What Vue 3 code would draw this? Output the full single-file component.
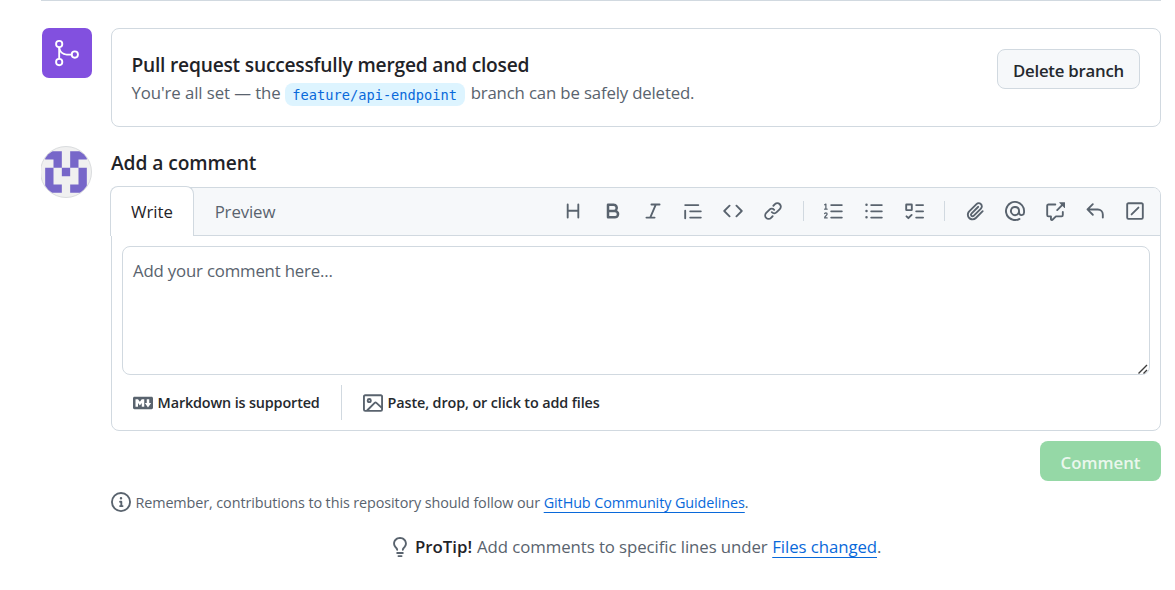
<script setup>
import { ref } from 'vue'

const comment = ref('')

const toolGroups = [
  [
    { label: 'Heading', d: 'M3.75 2a.75.75 0 0 1 .75.75V7h7V2.75a.75.75 0 0 1 1.5 0v10.5a.75.75 0 0 1-1.5 0V8.5h-7v4.75a.75.75 0 0 1-1.5 0V2.75A.75.75 0 0 1 3.75 2Z' },
    { label: 'Bold', d: 'M4 2h4.5a3.501 3.501 0 0 1 2.852 5.53A3.499 3.499 0 0 1 9.5 14H4a1 1 0 0 1-1-1V3a1 1 0 0 1 1-1Zm1 7v3h4.5a1.5 1.5 0 0 0 0-3Zm3.5-2a1.5 1.5 0 0 0 0-3H5v3Z' },
    { label: 'Italic', d: 'M6 2.75A.75.75 0 0 1 6.75 2h6.5a.75.75 0 0 1 0 1.5h-2.505l-3.858 9H9.25a.75.75 0 0 1 0 1.5h-6.5a.75.75 0 0 1 0-1.5h2.505l3.858-9H6.75A.75.75 0 0 1 6 2.75Z' },
    { label: 'Quote', d: 'M1.75 2.5h10.5a.75.75 0 0 1 0 1.5H1.75a.75.75 0 0 1 0-1.5Zm4 5h8.5a.75.75 0 0 1 0 1.5h-8.5a.75.75 0 0 1 0-1.5Zm0 5h8.5a.75.75 0 0 1 0 1.5h-8.5a.75.75 0 0 1 0-1.5ZM2.5 7.75v6a.75.75 0 0 1-1.5 0v-6a.75.75 0 0 1 1.5 0Z' },
    { label: 'Code', d: 'm11.28 3.22 4.25 4.25a.75.75 0 0 1 0 1.06l-4.25 4.25a.749.749 0 0 1-1.275-.326.749.749 0 0 1 .215-.734L13.94 8l-3.72-3.72a.749.749 0 0 1 .326-1.275.749.749 0 0 1 .734.215Zm-6.56 0a.751.751 0 0 1 1.042.018.751.751 0 0 1 .018 1.042L2.06 8l3.72 3.72a.749.749 0 0 1-.326 1.275.749.749 0 0 1-.734-.215L.47 8.53a.75.75 0 0 1 0-1.06Z' },
    { label: 'Link', d: 'm7.775 3.275 1.25-1.25a3.5 3.5 0 1 1 4.95 4.95l-2.5 2.5a3.5 3.5 0 0 1-4.95 0 .751.751 0 0 1 .018-1.042.751.751 0 0 1 1.042-.018 1.998 1.998 0 0 0 2.83 0l2.5-2.5a2.002 2.002 0 0 0-2.83-2.83l-1.25 1.25a.751.751 0 0 1-1.042-.018.751.751 0 0 1-.018-1.042Zm-4.69 9.64a1.998 1.998 0 0 0 2.83 0l1.25-1.25a.751.751 0 0 1 1.042.018.751.751 0 0 1 .018 1.042l-1.25 1.25a3.5 3.5 0 1 1-4.95-4.95l2.5-2.5a3.5 3.5 0 0 1 4.95 0 .751.751 0 0 1-.018 1.042.751.751 0 0 1-1.042.018 1.998 1.998 0 0 0-2.83 0l-2.5 2.5a1.998 1.998 0 0 0 0 2.83Z' }
  ],
  [
    { label: 'Numbered list', d: 'M5 3.25a.75.75 0 0 1 .75-.75h8.5a.75.75 0 0 1 0 1.5h-8.5A.75.75 0 0 1 5 3.25Zm0 5a.75.75 0 0 1 .75-.75h8.5a.75.75 0 0 1 0 1.5h-8.5A.75.75 0 0 1 5 8.25Zm0 5a.75.75 0 0 1 .75-.75h8.5a.75.75 0 0 1 0 1.5h-8.5a.75.75 0 0 1-.75-.75Z', stroke: 'M.5 3 1.5 2.5V6.5M.5 6.5H2.5M.5 10.05Q.9 9.5 1.5 9.5 2.5 9.5 2.5 10.4C2.5 11.7.5 11.9.5 13.5H2.5' },
    { label: 'Bulleted list', d: 'M5.75 2.5h8.5a.75.75 0 0 1 0 1.5h-8.5a.75.75 0 0 1 0-1.5Zm0 5h8.5a.75.75 0 0 1 0 1.5h-8.5a.75.75 0 0 1 0-1.5Zm0 5h8.5a.75.75 0 0 1 0 1.5h-8.5a.75.75 0 0 1 0-1.5ZM2 14a1 1 0 1 1 0-2 1 1 0 0 1 0 2Zm1-6a1 1 0 1 1-2 0 1 1 0 0 1 2 0ZM2 4a1 1 0 1 1 0-2 1 1 0 0 1 0 2Z' },
    { label: 'Task list', d: 'M2 2h4a1 1 0 0 1 1 1v4a1 1 0 0 1-1 1H2a1 1 0 0 1-1-1V3a1 1 0 0 1 1-1Zm4.655 8.595a.75.75 0 0 1 0 1.06L4.03 14.28a.75.75 0 0 1-1.06 0l-1.5-1.5a.749.749 0 0 1 .326-1.275.749.749 0 0 1 .734.215l.97.97 2.095-2.095a.75.75 0 0 1 1.06 0ZM9.75 2.5h5.5a.75.75 0 0 1 0 1.5h-5.5a.75.75 0 0 1 0-1.5Zm0 5h5.5a.75.75 0 0 1 0 1.5h-5.5a.75.75 0 0 1 0-1.5Zm0 5h5.5a.75.75 0 0 1 0 1.5h-5.5a.75.75 0 0 1 0-1.5Zm-7.25-9v3h3v-3Z' }
  ],
  [
    { label: 'Attach files', d: 'M12.212 3.02a1.753 1.753 0 0 0-2.478.003l-5.83 5.83a3.007 3.007 0 0 0-.88 2.127c0 .795.315 1.551.88 2.116.567.567 1.333.89 2.126.89.79 0 1.548-.321 2.116-.89l5.48-5.48a.75.75 0 0 1 1.061 1.06l-5.48 5.48a4.492 4.492 0 0 1-3.177 1.33c-1.2 0-2.345-.487-3.187-1.33a4.483 4.483 0 0 1-1.32-3.177c0-1.195.475-2.341 1.32-3.186l5.83-5.83a3.25 3.25 0 0 1 5.553 2.297c0 .863-.343 1.691-.953 2.301L7.439 12.39c-.375.377-.884.59-1.416.593a1.998 1.998 0 0 1-1.412-.593 1.992 1.992 0 0 1 0-2.828l5.48-5.48a.751.751 0 0 1 1.042.018.751.751 0 0 1 .018 1.042l-5.48 5.48a.492.492 0 0 0 0 .707.499.499 0 0 0 .352.154.51.51 0 0 0 .356-.154l5.833-5.827a1.755 1.755 0 0 0 0-2.481Z' },
    { label: 'Mention', d: 'M4.75 2.37a6.501 6.501 0 0 0 6.5 11.26.75.75 0 0 1 .75 1.298A7.999 7.999 0 0 1 .989 4.148 8 8 0 0 1 16 7.75v1.5a2.75 2.75 0 0 1-5.072 1.475 3.999 3.999 0 0 1-6.65-4.19A4 4 0 0 1 12 8v1.25a1.25 1.25 0 0 0 2.5 0V7.867a6.5 6.5 0 0 0-9.75-5.496ZM10.5 8a2.5 2.5 0 1 0-5 0 2.5 2.5 0 0 0 5 0Z' },
    { label: 'Reference', d: 'M2.75 3.5a.25.25 0 0 0-.25.25v7.5c0 .138.112.25.25.25h2a.75.75 0 0 1 .75.75v2.19l2.72-2.72a.749.749 0 0 1 .53-.22h4.5a.25.25 0 0 0 .25-.25v-2.5a.75.75 0 0 1 1.5 0v2.5A1.75 1.75 0 0 1 13.25 13H9.06l-2.573 2.573A1.458 1.458 0 0 1 4 14.543V13H2.75A1.75 1.75 0 0 1 1 11.25v-7.5C1 2.784 1.784 2 2.75 2h5.5a.75.75 0 0 1 0 1.5ZM16 1.25v4.146a.25.25 0 0 1-.427.177L14.03 4.03l-3.75 3.75a.749.749 0 0 1-1.275-.326.749.749 0 0 1 .215-.734l3.75-3.75-1.543-1.543A.25.25 0 0 1 11.604 1h4.146a.25.25 0 0 1 .25.25Z' },
    { label: 'Saved replies', d: 'M6.78 1.97a.75.75 0 0 1 0 1.06L3.81 6h6.44A4.75 4.75 0 0 1 15 10.75v2.5a.75.75 0 0 1-1.5 0v-2.5a3.25 3.25 0 0 0-3.25-3.25H3.81l2.97 2.97a.749.749 0 0 1-.326 1.275.749.749 0 0 1-.734-.215L1.47 7.28a.75.75 0 0 1 0-1.06l4.25-4.25a.75.75 0 0 1 1.06 0Z' },
    { label: 'Slash commands', d: 'M2.75 1h10.5c.966 0 1.75.784 1.75 1.75v10.5A1.75 1.75 0 0 1 13.25 15H2.75A1.75 1.75 0 0 1 1 13.25V2.75C1 1.784 1.784 1 2.75 1ZM2.5 2.75v10.5c0 .138.112.25.25.25h10.5a.25.25 0 0 0 .25-.25V2.75a.25.25 0 0 0-.25-.25H2.75a.25.25 0 0 0-.25.25Zm8.78 1.97a.75.75 0 0 1 0 1.06l-5.5 5.5a.75.75 0 0 1-1.06-1.06l5.5-5.5a.75.75 0 0 1 1.06 0Z' }
  ]
]
</script>

<template>
  <main class="page">
    <section class="row merged">
      <div class="badge">
        <svg width="30" height="30" viewBox="0 0 24 24" fill="currentColor">
          <path d="M15 13.25a3.25 3.25 0 1 1 6.5 0 3.25 3.25 0 0 1-6.5 0Zm-12.5 6a3.25 3.25 0 1 1 6.5 0 3.25 3.25 0 0 1-6.5 0Zm0-14.5a3.25 3.25 0 1 1 6.5 0 3.25 3.25 0 0 1-6.5 0ZM5.75 6.5a1.75 1.75 0 1 0-.001-3.501A1.75 1.75 0 0 0 5.75 6.5Zm0 14.5a1.75 1.75 0 1 0-.001-3.501A1.75 1.75 0 0 0 5.75 21Zm12.5-6a1.75 1.75 0 1 0-.001-3.501A1.75 1.75 0 0 0 18.25 15Z" />
          <path d="M6.5 7.25c0 2.9 2.35 5.25 5.25 5.25h4.5V14h-4.5A6.75 6.75 0 0 1 5 7.25Z" />
          <path d="M5.75 16.75A.75.75 0 0 1 5 16V8a.75.75 0 0 1 1.5 0v8a.75.75 0 0 1-.75.75Z" />
        </svg>
      </div>
      <div class="card">
        <div class="card-text">
          <h3 class="title">Pull request successfully merged and closed</h3>
          <p class="sub"><span class="sub-a">You're all set — the</span><code class="branch">feature/api-endpoint</code><span class="sub-b">branch can be safely deleted.</span></p>
        </div>
        <button class="btn-delete" type="button">Delete branch</button>
      </div>
    </section>

    <section class="row compose">
      <div class="avatar">
        <svg width="50" height="50" viewBox="0 0 420 420" fill="#7767c9">
          <path d="M35 35h140v140h-70v-70H35ZM245 35h140v70h-70v70h-70ZM35 175h70v140h70v70H35ZM175 175h70v70h-70ZM315 175h70v210H245v-70h70Z" />
        </svg>
      </div>
      <div class="compose-main">
        <h3 class="heading">Add a comment</h3>
        <div class="editor">
          <div class="editor-head">
            <button class="tab tab-write" type="button"><span>Write</span></button>
            <button class="tab tab-preview" type="button"><span>Preview</span></button>
            <div class="tools">
              <div v-for="(group, i) in toolGroups" :key="i" class="group">
                <button v-for="t in group" :key="t.label" class="tool" type="button" :aria-label="t.label">
                  <svg width="20" height="20" viewBox="0 0 16 16" fill="currentColor">
                    <path :d="t.d" />
                    <path v-if="t.stroke" :d="t.stroke" fill="none" stroke="currentColor" stroke-linecap="round" stroke-linejoin="round" />
                  </svg>
                </button>
              </div>
            </div>
          </div>
          <div class="field">
            <textarea v-model="comment" placeholder="Add your comment here..."></textarea>
            <svg class="grip" width="10" height="10" viewBox="0 0 10 10" stroke="#3c3c3c" stroke-width="1.4" fill="none">
              <path d="M0.5 9.5 9 1M5.5 9.5 9 6" />
            </svg>
          </div>
          <div class="editor-foot">
            <span class="hint">
              <svg width="20" height="20" viewBox="0 0 16 16" fill="currentColor">
                <path d="M14.85 3c.63 0 1.15.52 1.14 1.15v7.7c0 .63-.51 1.15-1.15 1.15H1.15C.52 13 0 12.48 0 11.84V4.15C0 3.52.52 3 1.15 3ZM9 11V5H7L5.5 7 4 5H2v6h2V8l1.5 1.92L7 8v3Zm2.99.5L14.5 8H13V5h-2v3H9.5Z" />
              </svg>
              <span class="hint-md">Markdown is supported</span>
            </span>
            <span class="hint hint-second">
              <svg width="20" height="20" viewBox="0 0 16 16" fill="currentColor">
                <path d="M16 13.25A1.75 1.75 0 0 1 14.25 15H1.75A1.75 1.75 0 0 1 0 13.25V2.75C0 1.784.784 1 1.75 1h12.5c.966 0 1.75.784 1.75 1.75ZM1.75 2.5a.25.25 0 0 0-.25.25v10.5c0 .138.112.25.25.25h.94l.03-.03 6.077-6.078a1.75 1.75 0 0 1 2.412-.06L14.5 10.31V2.75a.25.25 0 0 0-.25-.25Zm12.5 11a.25.25 0 0 0 .25-.25v-.917l-4.298-3.889a.25.25 0 0 0-.344.009L4.81 13.5ZM7 6a2 2 0 1 1-3.999.001A2 2 0 0 1 7 6ZM5.5 6a.5.5 0 1 0-1 0 .5.5 0 0 0 1 0Z" />
              </svg>
              <span class="hint-files">Paste, drop, or click to add files</span>
            </span>
          </div>
        </div>
        <div class="actions">
          <button class="btn-comment" type="button" disabled>Comment</button>
        </div>
        <p class="note">
          <svg width="20" height="20" viewBox="0 0 16 16" fill="currentColor">
            <path d="M0 8a8 8 0 1 1 16 0A8 8 0 0 1 0 8Zm8-6.5a6.5 6.5 0 1 0 0 13 6.5 6.5 0 0 0 0-13ZM6.5 7.75A.75.75 0 0 1 7.25 7h1a.75.75 0 0 1 .75.75v2.75h.25a.75.75 0 0 1 0 1.5h-2a.75.75 0 0 1 0-1.5h.25v-2h-.25a.75.75 0 0 1-.75-.75ZM8 6a1 1 0 1 1 0-2 1 1 0 0 1 0 2Z" />
          </svg>
          <span class="note-text">Remember, contributions to this repository should follow our <a>GitHub Community Guidelines</a>.</span>
        </p>
      </div>
    </section>

    <p class="protip">
      <svg width="20" height="20" viewBox="0 0 16 16" fill="currentColor">
        <path d="M8 1.5c-2.363 0-4 1.69-4 3.75 0 .984.424 1.625.984 2.304l.214.253c.223.264.47.556.673.848.284.411.537.896.621 1.49a.75.75 0 0 1-1.484.211c-.04-.282-.163-.547-.37-.847a8.456 8.456 0 0 0-.542-.68c-.084-.1-.173-.205-.268-.32C3.201 7.75 2.5 6.766 2.5 5.25 2.5 2.31 4.863 0 8 0s5.5 2.31 5.5 5.25c0 1.516-.701 2.5-1.328 3.259-.095.115-.184.22-.268.319-.207.245-.383.453-.541.681-.208.3-.33.565-.37.847a.751.751 0 0 1-1.485-.212c.084-.593.337-1.078.621-1.489.203-.292.45-.584.673-.848.075-.088.147-.173.213-.253.561-.679.985-1.32.985-2.304 0-2.06-1.637-3.75-4-3.75ZM5.75 12h4.5a.75.75 0 0 1 0 1.5h-4.5a.75.75 0 0 1 0-1.5ZM6 15.25a.75.75 0 0 1 .75-.75h2.5a.75.75 0 0 1 0 1.5h-2.5a.75.75 0 0 1-.75-.75Z" />
      </svg>
      <strong>ProTip!</strong>
      <span class="protip-text">Add comments to specific lines under</span>
      <a>Files changed</a><span class="dot">.</span>
    </p>
  </main>
</template>

<style>
body { margin: 0; background: #fff; }
</style>

<style scoped>
.page {
  box-sizing: border-box;
  width: 1120px;
  height: 590px;
  margin-left: 41px;
  border-top: 1px solid #d1d9e0;
  font-family: "Open Sans", "Noto Sans", sans-serif;
  font-size: 16.8px;
  color: #59636e;
  overflow: hidden;
}
svg { display: block; flex: none; }
h3, p { margin: 0; }
button, textarea { font: inherit; letter-spacing: inherit; margin: 0; }
a { color: #0969da; text-decoration: underline 1px; text-underline-offset: 4px; text-decoration-skip-ink: none; }

.row { display: flex; align-items: flex-start; }
.merged { margin-top: 27px; padding-left: 1px; }
.badge {
  width: 50px; height: 50px; margin-right: 19px; border-radius: 7px;
  display: flex; align-items: center; justify-content: center;
  background: #8250df; color: #fff;
}
.card {
  box-sizing: border-box; flex: 1; height: 99px; padding: 20px 20px 20px 19.4px;
  display: flex; justify-content: space-between; align-items: flex-start;
  border: 1px solid #d1d9e0; border-radius: 8px;
}
.title { font-size: 19.2px; line-height: 30px; margin-top: 1px; font-weight: 600; color: #1f2328; letter-spacing: -0.21px; white-space: nowrap; }
.sub { display: flex; align-items: center; height: 26px; line-height: 26px; white-space: nowrap; }
.sub-a { letter-spacing: -0.08px; }
.sub-b { letter-spacing: -0.16px; }
.branch {
  box-sizing: border-box; width: 180px; height: 23px; line-height: 24px; margin: 3px 6px 0 4px;
  border-radius: 8px; background: #ddf4ff; color: #0969da; text-align: center;
  font-family: "DejaVu Sans Mono", monospace; font-size: 13.7px;
}
.btn-delete {
  box-sizing: border-box; width: 143px; height: 40px; padding: 2px 0 0;
  border: 1px solid #d1d9e0; border-radius: 8px; background: #f6f8fa; color: #25292e;
  font-weight: 600; letter-spacing: -0.24px; white-space: nowrap;
}

.compose { margin-top: 19px; }
.avatar {
  width: 50px; height: 50px; margin: 0 19px 0 -1px; border: 1px solid #dadcde; border-radius: 50%;
  overflow: hidden; background: #f0f0f0;
}
.compose-main { flex: 1; min-width: 0; }
.heading { height: 41px; line-height: 34px; font-size: 19.2px; font-weight: 600; letter-spacing: -0.08px; color: #1f2328; }
.editor { box-sizing: border-box; width: 1050px; height: 244px; border: 1px solid #d1d9e0; border-radius: 8px; }
.editor-head {
  box-sizing: border-box; height: 48px; display: flex; background: #f6f8fa;
  border-bottom: 1px solid #d1d9e0; border-radius: 7px 7px 0 0;
}
.tab { box-sizing: border-box; padding: 0; border: 0; background: none; color: #59636e; }
.tab-write {
  width: 84px; height: 50px; margin: -2px 0 0 -2px; color: #1f2328; background: #fff;
  border: 1px solid #d1d9e0; border-bottom: 0; border-radius: 8px 8px 0 0;
}
.tab-preview { width: 102px; letter-spacing: -0.1px; }
.tools { margin-left: auto; padding: 0 5px 1px 0; display: flex; align-items: center; }
.group { display: flex; align-items: center; }
.group + .group::before { content: ""; width: 1px; height: 20px; margin: 0 10px 0 9.6px; background: #d1d9e0; }
.group:first-child { margin-right: 0.8px; }
.tool { width: 40px; height: 40px; padding: 0; border: 0; background: none; color: #59636e; display: flex; align-items: center; justify-content: center; }
.field { position: relative; margin: 10px 10px 0; height: 129px; }
.field textarea {
  box-sizing: border-box; display: block; width: 100%; height: 129px; padding: 11px 10px 9px; resize: none;
  border: 1px solid #d1d9e0; border-radius: 8px; line-height: 26px; letter-spacing: -0.18px; background: #fff; outline: 0;
}
.field textarea::placeholder { color: #59636e; opacity: 1; }
.grip { position: absolute; right: 2px; bottom: 1px; }
.editor-foot { display: flex; align-items: center; height: 35px; margin: 10px 0 0 21px; font-size: 14.4px; font-weight: 600; color: #25292e; white-space: nowrap; }
.hint { display: flex; align-items: center; gap: 4.6px; height: 35px; }
.hint svg { color: #59636e; }
.hint-md { width: 183.4px; letter-spacing: -0.15px; }
.hint-files { letter-spacing: -0.12px; }
.hint-second { border-left: 1px solid #d1d9e0; padding-left: 21px; }
.actions { display: flex; justify-content: flex-end; margin-top: 10px; }
.btn-comment {
  width: 121px; height: 40px; padding: 3px 0 0; border: 0; border-radius: 8px;
  background: #95d8a6; color: #eaf7ed; font-weight: 600;
}
.note { display: flex; align-items: center; gap: 4.4px; height: 22px; margin-top: 10px; font-size: 14.4px; letter-spacing: -0.1px; white-space: nowrap; }
.protip { display: flex; align-items: center; height: 24px; margin: 21px 0 0 349px; white-space: nowrap; letter-spacing: -0.07px; }
.protip svg { margin-top: 1px; }
.protip strong { margin: 0 5px; font-weight: 600; color: #1f2328; letter-spacing: 0; }
.protip-text { margin-right: 4.6px; }
</style>
